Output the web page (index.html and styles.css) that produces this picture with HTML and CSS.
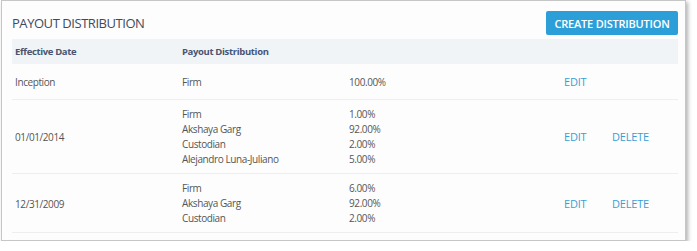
FILE: index.html
```html
<!DOCTYPE html>
<html lang="en">
<head>
  <meta charset="UTF-8" />
  <title>Payout Distribution</title>
  <link rel="stylesheet" href="styles.css">
</head>
<body>
  <div class="panel">
    <div class="panel-head">
      <h1>PAYOUT DISTRIBUTION</h1>
      <button class="btn">CREATE DISTRIBUTION</button>
    </div>
    <div class="row header">
      <div>Effective Date</div>
      <div>Payout Distribution</div>
    </div>
    <div class="row">
      <div class="date">Inception</div>
      <div class="lines"><span>Firm</span></div>
      <div class="lines"><span>100.00%</span></div>
      <a href="#" class="act">EDIT</a>
      <span></span>
    </div>
    <div class="row">
      <div class="date">01/01/2014</div>
      <div class="lines">
        <span>Firm</span>
        <span>Akshaya Garg</span>
        <span>Custodian</span>
        <span>Alejandro Luna-Juliano</span>
      </div>
      <div class="lines">
        <span>1.00%</span>
        <span>92.00%</span>
        <span>2.00%</span>
        <span>5.00%</span>
      </div>
      <a href="#" class="act">EDIT</a>
      <a href="#" class="act">DELETE</a>
    </div>
    <div class="row">
      <div class="date">12/31/2009</div>
      <div class="lines">
        <span>Firm</span>
        <span>Akshaya Garg</span>
        <span>Custodian</span>
      </div>
      <div class="lines">
        <span>6.00%</span>
        <span>92.00%</span>
        <span>2.00%</span>
      </div>
      <a href="#" class="act">EDIT</a>
      <a href="#" class="act">DELETE</a>
    </div>
  </div>
</body>
</html>
```

FILE: styles.css
```css
:root {
  --text: #555;
  --title: #3d4b5c;
  --accent: #2d9fd8;
  --link: #3a9ed4;
  --line: #eeeeee;
  --font: 'Open Sans', 'Noto Sans', sans-serif;
}
* { box-sizing: border-box; }
body {
  margin: 0;
  padding: 0 0 0 1px;
  background: #fff;
  font-family: var(--font);
  color: var(--text);
}
.panel {
  width: 685px;
  height: 241px;
  padding: 10px 7px 0 10px;
  background: #fdfdfd;
  border: 1px solid #c6c6c6;
  box-shadow: 2px 2px 4px rgba(0, 0, 0, 0.3);
}
.panel-head {
  display: flex;
  align-items: center;
  justify-content: space-between;
  height: 24px;
  margin-bottom: 4px;
}
h1 {
  margin: 0;
  font-size: 13px;
  font-weight: normal;
  color: var(--title);
  letter-spacing: -0.45px;
}
.btn {
  height: 24px;
  width: 132px;
  padding: 0;
  background: var(--accent);
  color: #fff;
  border: none;
  border-radius: 2px;
  font-family: var(--font);
  font-size: 11px;
  font-weight: 600;
  letter-spacing: -0.2px;
}
.row {
  display: grid;
  grid-template-columns: 167px 167px 215px 48px 1fr;
  align-items: center;
  padding: 7px 0 6px 3px;
  font-size: 10px;
  letter-spacing: -0.4px;
  border-bottom: 1px solid var(--line);
}
.row.header {
  height: 25px;
  padding: 0 0 0 3px;
  background: #f0f4f7;
  border-bottom: none;
  font-size: 9.5px;
  letter-spacing: -0.35px;
  font-weight: bold;
  color: #4a5470;
}
.lines {
  display: flex;
  flex-direction: column;
}
.lines span { line-height: 15px; }
.act {
  line-height: 22px;
  font-size: 11px;
  letter-spacing: -0.2px;
  color: var(--link);
  text-decoration: none;
}
```
